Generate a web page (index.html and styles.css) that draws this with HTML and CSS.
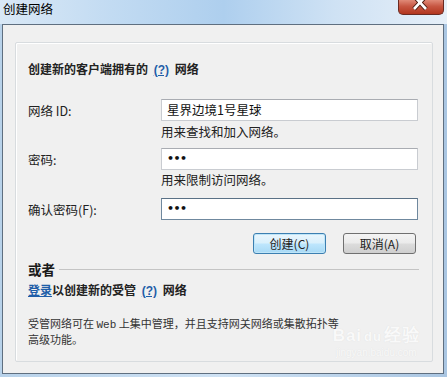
FILE: index.html
```html
<!DOCTYPE html>
<html lang="zh-CN">
<head>
<meta charset="utf-8">
<title>创建网络</title>
<link rel="stylesheet" href="styles.css">
</head>
<body>
<div class="window">
  <div class="titlebar">
    <span class="title">创建网络</span>
    <span class="close">
      <svg width="46" height="16" viewBox="0 0 46 16">
        <path d="M17 -4 L29 9 M29 -4 L17 9" stroke="#4a1a10" stroke-width="4.5" fill="none"/>
        <path d="M17 -4 L29 9 M29 -4 L17 9" stroke="#ffffff" stroke-width="2.6" fill="none"/>
      </svg>
    </span>
  </div>
  <div class="frame">
    <div class="group">
      <div class="heading">创建新的客户端拥有的 <a class="help">(?)</a> 网络</div>
      <div class="form">
        <span class="lbl">网络 ID:</span>
        <div class="field">星界边境1号星球</div>
        <div class="hint first">用来查找和加入网络。</div>
        <span class="lbl row2">密码:</span>
        <div class="field pw row2">•••</div>
        <div class="hint">用来限制访问网络。</div>
        <span class="lbl row3">确认密码(F):</span>
        <div class="field pw focus row3">•••</div>
      </div>
      <div class="buttons">
        <button class="btn default">创建(C)</button>
        <button class="btn">取消(A)</button>
      </div>
      <div class="divider"><span class="or">或者</span><span class="rule"></span></div>
      <div class="managed"><a class="login">登录</a>以创建新的受管 <a class="help">(?)</a> 网络</div>
      <p class="desc">受管网络可在 <span class="mono">Web</span> 上集中管理，并且支持网关网络或集散拓扑等<br>高级功能。</p>
      <div class="watermark">
        <span class="wm-logo">Bai<span class="paw">du</span>经验</span>
        <span class="wm-url">jingyan.baidu.com</span>
      </div>
    </div>
  </div>
</div>
</body>
</html>
```

FILE: styles.css
```css
html, body {
  margin: 0;
  padding: 0;
}
body {
  width: 447px;
  height: 377px;
  overflow: hidden;
  background: linear-gradient(90deg, #b8d2ea 0%, #cfe2f4 50%, #aac6e2 100%);
  font-family: "Noto Sans CJK SC", "Noto Sans", sans-serif;
  font-size: 12px;
  color: #1b1b1b;
}
.window {
  display: flex;
  flex-direction: column;
  height: 377px;
  margin: 0 3px 0 2px;
}
.titlebar {
  height: 24px;
  margin: 0 -3px 0 -2px;
  padding-left: 3px;
  display: flex;
  align-items: flex-start;
  justify-content: space-between;
  background: linear-gradient(90deg, #d9e8f6 0%, #c2dbf2 25%, #aecfee 50%, #cfe2f4 75%, #e6eff8 100%);
}
.title {
  font-size: 12.5px;
  line-height: 18px;
  color: #000;
}
.close {
  width: 46px;
  height: 15px;
  margin-right: 3px;
  box-sizing: border-box;
  border: 1px solid #6a2a22;
  border-top: none;
  border-radius: 0 0 5px 5px;
  background: linear-gradient(180deg, #e08a78 0%, #c75642 45%, #b2361f 100%);
  overflow: hidden;
  display: flex;
  justify-content: center;
}
.close svg {
  display: block;
  margin-left: -2px;
  flex-shrink: 0;
}
.frame {
  height: 350px;
  box-sizing: border-box;
  border: 1px solid #5f6f80;
  background: #f0f0f0;
  padding: 17px 10px 11px 12px;
  display: flex;
}
.group {
  position: relative;
  flex: 1;
  border: 1px solid #d8dcdf;
  border-radius: 2px;
  box-shadow: inset 1px 1px 0 #ffffff;
  padding: 18px 13px 0 12px;
}
.heading, .managed {
  font-weight: bold;
  font-size: 12px;
  line-height: 16px;
  color: #222;
}
.help, .login {
  color: #1f5ea8;
  text-decoration: underline;
}
.help {
  font-family: "Liberation Sans", sans-serif;
  padding: 0 3px;
}
.form {
  margin-top: 21px;
  display: grid;
  grid-template-columns: 133px 257px;
}
.lbl {
  grid-column: 1;
  align-self: center;
  font-size: 12.5px;
  color: #222;
}
.field {
  grid-column: 2;
  height: 22px;
  box-sizing: border-box;
  border: 1px solid #c9ccd1;
  border-top-color: #a9acb2;
  background: #fff;
  padding-left: 5px;
  font-size: 12.5px;
  line-height: 20px;
  color: #111;
}
.field.row2 { margin-top: 8px; }
.lbl.row2 { margin-top: 8px; }
.field.row3 { margin-top: 10px; }
.lbl.row3 { margin-top: 10px; }
.pw {
  font-family: "DejaVu Sans", sans-serif;
  font-size: 11px;
  letter-spacing: -0.5px;
  font-weight: bold;
  line-height: 19px;
}
.field.focus {
  border-color: #6f889e;
  border-top-color: #5a7186;
}
.hint {
  grid-column: 2;
  margin-top: 2px;
  line-height: 16px;
  font-size: 12.5px;
  color: #222;
}
.hint.first { margin-top: 3px; }
.buttons {
  margin-top: 13px;
  display: flex;
  justify-content: flex-end;
  gap: 17px;
  padding-right: 3px;
}
.btn {
  width: 73px;
  height: 21px;
  box-sizing: border-box;
  border: 1px solid #707070;
  border-radius: 3px;
  background: linear-gradient(180deg, #f4f4f4 0%, #ebebeb 48%, #dcdcdc 52%, #cfcfcf 100%);
  font-family: "Noto Sans CJK SC", sans-serif;
  font-size: 12px;
  line-height: 17px;
  color: #222;
  padding: 0;
}
.btn.default {
  border-color: #3c7fb1;
  box-shadow: inset 0 0 0 1px #bfe5f8;
  background: linear-gradient(180deg, #eaf6fd 0%, #d9f0fc 48%, #bee6fd 52%, #a7d9f5 100%);
}
.divider {
  margin-top: 6px;
  display: flex;
  align-items: center;
  gap: 4px;
}
.or {
  font-weight: bold;
  font-size: 13.5px;
  line-height: 18px;
  color: #1a1a1a;
}
.rule {
  flex: 1;
  height: 1px;
  background: #c4c4c4;
}
.managed {
  margin-top: 4px;
}
.desc {
  margin: 17px 0 0 0;
  font-size: 11px;
  line-height: 14px;
  color: #333;
}
.mono {
  font-family: "Liberation Mono", monospace;
  font-size: 11px;
}
.watermark {
  position: absolute;
  right: 12px;
  bottom: 2px;
  display: flex;
  flex-direction: column;
  align-items: center;
  color: #fbfbfb;
  text-shadow: 0 0 1px #dadada;
  opacity: 0.85;
  pointer-events: none;
}
.wm-logo {
  font-family: "Liberation Sans", sans-serif;
  font-weight: bold;
  font-size: 17px;
  line-height: 20px;
  letter-spacing: 1px;
}
.paw {
  font-size: 13px;
  margin: 0 2px;
}
.wm-url {
  font-family: "Liberation Sans", sans-serif;
  font-size: 10px;
  line-height: 12px;
}
```
